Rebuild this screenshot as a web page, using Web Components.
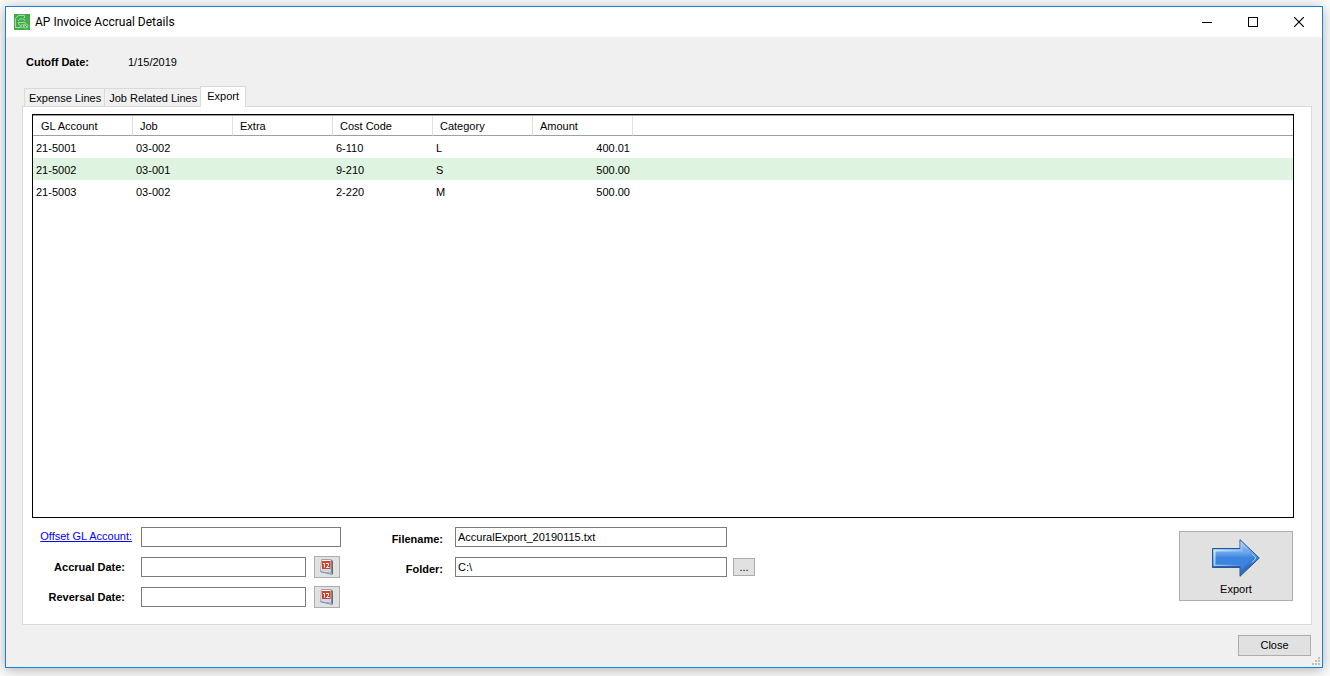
<!DOCTYPE html>
<html lang="en">
<head>
<meta charset="utf-8">
<title>AP Invoice Accrual Details</title>
<style>
  html { height: 100%; background: #fff; }
  body {
    margin: 0; height: 100%; box-sizing: border-box; padding: 6px 7px 8px 5px; background: #fbfbfb;
    font: 11px/14px "Liberation Sans", Arial, sans-serif; color: #000;
  }
</style>
</head>
<body>
<accrual-dialog></accrual-dialog>

<script>
const define = (name, html, setup) => {
  const template = document.createElement('template');
  template.innerHTML = html;
  customElements.define(name, class extends HTMLElement {
    constructor() {
      super();
      this.attachShadow({ mode: 'open' }).append(template.content.cloneNode(true));
    }
    connectedCallback() {
      if (setup && !this.ready) { this.ready = true; setup(this, this.shadowRoot); }
    }
  });
};

/* Title bar with the application icon and the caption buttons */
define('title-bar', `
<style>
  :host { display: flex; align-items: center; height: 30px; flex: none; background: #fff; padding-left: 8px; }
  h1 { flex: 1; margin: 0 0 0 5px; font: 12px/16px Roboto, "Segoe UI", sans-serif; }
  svg { display: block; }
  button { display: flex; align-items: center; justify-content: center; width: 46px; height: 30px; padding: 0; border: 0; background: none; }
</style>
<svg width="16" height="16" viewBox="0 0 16 16" aria-hidden="true">
  <rect width="16" height="16" fill="#41ad49"/>
  <g fill="none" stroke="#a5d9a9">
    <path d="M1.500 13.500V4.500L4.500 1.500H10.500V4M1.500 13.500H7"/>
    <path d="M4.500 7c0-3 6.500-3 6.500 0M4 8.500h7.500M4.500 8.500c0 2 1 3 2.500 3"/>
    <circle cx="8.500" cy="12" r="1.500"/><circle cx="11.800" cy="12" r="2.200"/><path d="M10.500 10.500l3 3"/>
  </g>
</svg>
<h1><slot></slot></h1>
<button type="button" aria-label="Minimize"><svg width="10" height="10"><path d="M0 5.500h10" stroke="#000"/></svg></button>
<button type="button" aria-label="Maximize"><svg width="10" height="10"><rect x=".5" y=".5" width="9" height="9" fill="none" stroke="#000"/></svg></button>
<button type="button" aria-label="Close window"><svg width="10" height="10"><path d="M0 0l10 10M10 0L0 10" stroke="#000" stroke-width="1.200"/></svg></button>
`);

/* Tabs over one bordered page */
define('tab-panel', `
<style>
  :host { display: flex; flex-direction: column; }
  nav { display: flex; align-items: flex-end; padding-left: 2px; margin-bottom: -1px; z-index: 1; }
  button {
    box-sizing: border-box; font: inherit; color: inherit; height: 18px; padding: 0 3px 0 4px; white-space: nowrap;
    background: #f0f0f0; border: 1px solid #d9d9d9; border-right-width: 0; margin-bottom: 1px; border-bottom: 0;
  }
  button[aria-selected="true"] {
    height: 21px; padding: 0 6px 2px; border-right-width: 1px; background: #fff; margin-bottom: 0;
  }
  section {
    flex: 1; display: flex; flex-direction: column; box-sizing: border-box;
    background: #fff; border: 1px solid #d9d9d9; padding: 7px 17px 17px 9px;
  }
</style>
<nav role="tablist"></nav>
<section role="tabpanel"><slot></slot></section>
`, (host, root) => {
  const nav = root.querySelector('nav');
  host.getAttribute('tabs').split('|').forEach(name => {
    const b = document.createElement('button');
    b.type = 'button';
    b.setAttribute('role', 'tab');
    b.setAttribute('aria-selected', name === host.getAttribute('selected'));
    b.textContent = name;
    nav.append(b);
  });
});

/* Export lines */
define('lines-grid', `
<style>
  :host { display: block; flex: 1; min-height: 120px; border: 1px solid #000; box-sizing: border-box; background: #fff; }
  table { width: 100%; table-layout: fixed; border-collapse: separate; border-spacing: 0; border-top: 1px solid #a0a0a0; }
  col { width: 100px; }
  col.rest { width: auto; }
  th { box-sizing: border-box; height: 20px; padding: 0 7px; font-weight: normal; text-align: left; border-right: 1px solid #e0e0e0; border-bottom: 1px solid #a0a0a0; }
  th:first-child { padding-left: 8px; }
  th:last-child { border-right: 0; }
  td { height: 22px; box-sizing: border-box; padding: 2px 3px 0; }
  td:nth-child(6) { text-align: right; }
  tr:nth-child(even) td { background: #dff3e1; }
</style>
<table>
  <colgroup><col span="6"><col class="rest"></colgroup>
  <thead><tr><th>GL Account</th><th>Job</th><th>Extra</th><th>Cost Code</th><th>Category</th><th>Amount</th><th></th></tr></thead>
  <tbody></tbody>
</table>
`, (host, root) => {
  const rows = [
    ['21-5001', '03-002', '', '6-110', 'L', '400.01', ''],
    ['21-5002', '03-001', '', '9-210', 'S', '500.00', ''],
    ['21-5003', '03-002', '', '2-220', 'M', '500.00', '']
  ];
  const body = root.querySelector('tbody');
  rows.forEach(r => {
    const tr = body.insertRow();
    r.forEach(c => { tr.insertCell().textContent = c; });
  });
});

/* Label, text box and an optional trailing button */
define('form-field', `
<style>
  :host { display: grid; grid-template: 20px / var(--label-width) auto 1fr; align-items: center; height: 20px; }
  .label { text-align: right; padding-right: 16px; font-weight: bold; white-space: nowrap; }
  :host([link]) .label { padding: 0 9px 2px 0; font-weight: normal; }
  :host([low]) .label { padding: 4px 12px 0 0; }
  a { color: #00f; }
  input { box-sizing: border-box; width: var(--box-width); height: 20px; margin: 0; padding: 0 2px; border: 1px solid #7a7a7a; background: #fff; font: inherit; color: inherit; outline: 0; }
</style>
<span class="label"><label for="box"></label></span>
<input id="box" type="text">
<slot></slot>
`, (host, root) => {
  const label = root.querySelector('label');
  const text = host.getAttribute('label');
  if (host.hasAttribute('link')) {
    const a = document.createElement('a');
    a.href = '#';
    a.id = 'name';
    a.textContent = text;
    label.replaceWith(a);
    root.querySelector('input').setAttribute('aria-labelledby', 'name');
  } else label.textContent = text;
  root.querySelector('input').value = host.getAttribute('value') || '';
});

define('push-button', `
<style>
  :host { display: inline-block; }
  button {
    display: flex; flex-direction: column; align-items: center; justify-content: center; gap: 5px;
    box-sizing: border-box; width: 100%; height: 100%; margin: 0; padding: var(--button-padding, 0);
    font: inherit; color: inherit; background: #e1e1e1; border: 1px solid #adadad;
  }
</style>
<button type="button"><slot></slot></button>
`, (host, root) => {
  if (host.title) root.querySelector('button').setAttribute('aria-label', host.title);
});

define('calendar-icon', `
<style>:host, svg { display: block; }</style>
<svg width="14" height="16" viewBox="0 0 14 16" aria-hidden="true">
  <path d="M11 .5l2 1.500v13.500l-2-1.500z" fill="#5d6c78"/>
  <path d="M1.500.5H11V14L.5 12.500z" fill="#f6f9fc" stroke="#9aa7b2"/>
  <path d="M1.200 9.500H10.500V13.300L1 12z" fill="#c3daf0"/>
  <path d="M.5 12.800L12.500 15.500" stroke="#7e93a6"/>
  <path d="M2 2H10.500V10H2z" fill="#dc3d20"/>
  <path d="M3 4.500H4.500V8.500M6 4.500H8.500V6.300L6.500 8.500H9.500" fill="none" stroke="#fff"/>
</svg>
`);

define('arrow-icon', `
<style>:host, svg { display: block; }</style>
<svg width="48" height="38" viewBox="0 0 48 38" aria-hidden="true">
  <defs>
    <linearGradient id="fill" x2="0" y2="1">
      <stop offset="0" stop-color="#86b8f2"/><stop offset=".35" stop-color="#6ba6ec"/>
      <stop offset=".5" stop-color="#3b82de"/><stop offset="1" stop-color="#2763b8"/>
    </linearGradient>
    <linearGradient id="edge" x2="1" y2="1">
      <stop offset="0" stop-color="#eaf6ff"/><stop offset=".45" stop-color="#8dbdf2"/><stop offset=".8" stop-color="#2f6fc4"/>
    </linearGradient>
  </defs>
  <path d="M.5 9.500H28V.7L47.300 19 28 37.300V28.500H.5z" fill="url(#fill)" stroke="#27558f"/>
  <path d="M2.500 11.500H29.500V4.500L44 19 29.500 33.500V26.500H2.500z" fill="none" stroke="url(#edge)" stroke-width="2"/>
  <path d="M4 20h27l9-1-10 12v-5.500H4z" fill="#3f8ae8" opacity=".6"/>
  <path d="M40 14.500l4 4.500-4 4.500" fill="none" stroke="#b5d5fa"/>
  <path d="M1.500 27.500H29" stroke="#174a8c" opacity=".6"/>
</svg>
`);

define('accrual-dialog', `
<style>
  :host {
    display: flex; flex-direction: column; position: relative; box-sizing: border-box; min-height: 100%;
    background: #f0f0f0; border: 1px solid #1883d7; box-shadow: 0 2px 12px rgba(0,0,0,.3);
  }
  main { flex: 1; display: flex; flex-direction: column; padding: 18px 10px 11px 16px; }
  dl { display: flex; margin: 0 0 17px 4px; }
  dt { width: 102px; font-weight: bold; }
  dd { margin: 0; }
  tab-panel { flex: 1; }
  .form { display: flex; align-items: flex-start; padding-top: 9px; }
  .fields { display: grid; gap: 10px; }
  .dates { --label-width: 109px; --box-width: 165px; width: 309px; }
  .dates form-field[link] { --box-width: 200px; }
  .file { --label-width: 84px; --box-width: 272px; margin-left: 30px; flex: 1; }
  .pick { width: 26px; height: 22px; margin-left: 8px; }
  .browse { width: 22px; height: 18px; margin-left: 6px; }
  .export { --button-padding: 2px 0 0; width: 114px; height: 70px; margin: 4px 1px 0 0; }
  footer { display: flex; justify-content: flex-end; padding: 10px 1px 0 0; }
  .close { --button-padding: 0 0 2px; width: 73px; height: 21px; }
  .grip { position: absolute; right: 2px; bottom: 2px; }
</style>
<title-bar>AP Invoice Accrual Details</title-bar>
<main>
  <dl><dt>Cutoff Date:</dt><dd>1/15/2019</dd></dl>
  <tab-panel tabs="Expense Lines|Job Related Lines|Export" selected="Export">
    <lines-grid></lines-grid>
    <div class="form">
      <div class="fields dates">
        <form-field link label="Offset GL Account:"></form-field>
        <form-field label="Accrual Date:"><push-button class="pick" title="Pick accrual date"><calendar-icon></calendar-icon></push-button></form-field>
        <form-field label="Reversal Date:"><push-button class="pick" title="Pick reversal date"><calendar-icon></calendar-icon></push-button></form-field>
      </div>
      <div class="fields file">
        <form-field low label="Filename:" value="AccuralExport_20190115.txt"></form-field>
        <form-field low label="Folder:" value="C:\\"><push-button class="browse">...</push-button></form-field>
      </div>
      <push-button class="export"><arrow-icon></arrow-icon>Export</push-button>
    </div>
  </tab-panel>
  <footer><push-button class="close">Close</push-button></footer>
</main>
<svg class="grip" width="8" height="8" fill="#bfbfbf" aria-hidden="true">
  <path d="M6 0h2v2H6zM3 3h2v2H3zM6 3h2v2H6zM0 6h2v2H0zM3 6h2v2H3zM6 6h2v2H6z"/>
</svg>
`);
</script>
</body>
</html>
